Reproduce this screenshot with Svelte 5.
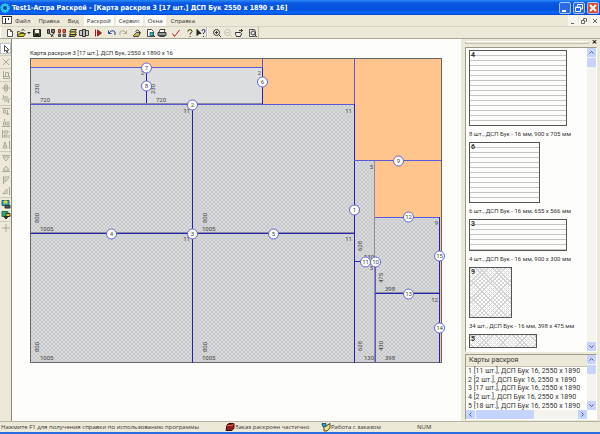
<script lang="ts">
  type Shape = [d: string, stroke: string, fill?: string];

  const gray = '#aca899';

  // every icon lives in a 10x10 box
  const icons: Record<string, Shape[]> = {
    new: [['M2.5 1.5h3l2 2v5h-5z', '#555', '#fff'], ['M5.5 1.5v2h2', '#555']],
    open: [['M1.5 8.5v-5h2l1 1h3v1', '#555', '#e8d860'], ['M1.5 8.5l2-3h6l-2 3z', '#4a4a20', '#d8c030'], ['M5.5 2.5q2-2 3 0', '#222']],
    save: [['M1.5 1.5h7v7h-7z', '#222', '#54582c'], ['M3.5 2h3v2.500h-3z', '#fff', '#fff'], ['M3.500 8.500v-2h3v2', '#222', '#222']],
    order: [['M1.500 1.500h2v4h-2zM5.500 1.500h3v3h-3z', '#333', '#888'], ['M3.500 5.500l4 3M8 5l-3 4', '#222']],
    parts: [['M1.500 1.500h2v3h-2zM6 1.500h2.500v3h-2.500z', '#a03028', '#c86050'], ['M1.500 6h2v2.500h-2zM6 6h2.500v2.500h-2.500z', '#444', '#888']],
    sheets: [['M3 1.500h5.500l-2 2.500h-5z', '#444', '#e0cc40'], ['M3 4h5.500l-2 2.500h-5z', '#444', '#e8d850'], ['M1 8.500l2-2h5.500l-2 2z', '#333', '#b8a030']],
    book: [['M.5 2.500h3v5h-3zM6.500 2.500h3v5h-3z', '#444', '#ccc'], ['M3.500 1.500h3v7h-3z', '#333', '#b8b8a8']],
    run: [['M2.500 1.500v7', '#a01818'], ['M4.500 2l4 3-4 3z', '#a01818', '#b82020']],
    undo: [['M1.500 2.500v3h3', '#1c3c9c'], ['M2 5q3-4 6-1v3', '#1c3c9c']],
    redo: [['M8.500 2.500v3h-3', gray], ['M8 5q-3-4-6-1v3', gray]],
    turn: [['M1.500 7.500l3-3h4l-2 4h-5z', '#444', '#c8b850'], ['M3.500 3.500q2-3 4 0v2', '#333']],
    preview: [['M1.500 1.500h4l2 2v5h-6z', '#444', '#fff'], ['M4 4.500h3v3h-3z', '#187888', '#50b8c0'], ['M7 7l2 2', '#222']],
    print: [['M3 1.500h5l-1 3h-5z', '#444', '#fff'], ['M1 4.500h8v3h-8z', '#333', '#999'], ['M2.500 7.500h5v1h-5z', '#444', '#ddd']],
    check: [['M1.500 5.500l2 3 5-6.500', '#b02020']],
    help: [['M3 3.500q0-2 2-2t2 2q0 1-2 2v1', '#2c2c10'], ['M5 8v1', '#2c2c10'], ['M4 2.500q1-1 2 0', '#d8c830']],
    whats: [['M1 1.500v6l2-2h2z', '#222', '#222'], ['M6 3q0-1.500 1.500-1.500t1.500 1.500-1.500 2v1M7.500 8v1', '#20208c']],
    zoomIn: [['M4.500 1.500a3 3 0 1 0 .1 0zM6.500 6.500l2.500 2.500', '#333'], ['M3 4.500h3M4.500 3v3', '#333']],
    zoomOut: [['M4.500 1.500a3 3 0 1 0 .1 0zM6.500 6.500l2.500 2.500M3 4.500h3', '#c4c0b0']],
    pan: [['M1.500 4.500h5l1 1-1 3h-4l-1-2z', '#333', '#eee'], ['M5 2.500h4M7.500 1v3', '#333']],
    fit: [['M1.500 1.500h5l1 2v5h-6z', '#555', '#eee'], ['M5 3a2 2 0 1 0 .1 0zM6.500 6.500l2.500 2.500', '#333']],
    pointer: [['M3.500 1.500v6l1.500-1.500 1 3 1-.5-1-2.500h2z', '#555', '#fff']],
    del: [['M2 2l6 6M8 2l-6 6', gray]],
    rotate: [['M2.500 1v7.500h6v-2h-6M4.500 6.500v-4h3v4', gray]],
    splitV: [['M1 5h8M3.500 2v6M6.500 2v6M5 .5v9', gray]],
    splitH: [['M1 5h8M3 3h4M3 7h4M2.500 1v3M7.500 6v3', gray]],
    top: [['M1 1.500h8M2.500 3h2v3h-2zM6.500 3v5M5 6l1.500 2 1.500-2', gray]],
    bottom: [['M1 8.500h8M2.500 4h2v3h-2zM6 4h2v3h-2zM3.500 1v2', gray]],
    left: [['M1.500 1v8M3 2h4v2h-4zM3 6h3v2h-3zM8 6v3', gray]],
    right: [['M8.500 1v8M2 8l2-6 2 6zM2.500 6h3', gray]],
    down: [['M1 2.500h8M2 4h6l-3 4z', gray]],
    up: [['M1 7.500h8M2 6h6l-3-4z', gray]],
    flag: [['M2.500 1v8M4 2h4l-2 3-2 2z', gray]],
    peak: [['M8.500 1v8M2 7.500l4-4.500v4.500z', gray]],
    saveMap: [['M1 1.500h7v5h-7z', '#186878', '#30a0a8'], ['M3 2h3v2h-3z', '#e0d040', '#e0d040'], ['M4 6.500h5v2.500h-5z', '#333', '#555']],
    loadMap: [['M1 1.500h6v5h-6z', '#187858', '#38a078'], ['M5 3.500h4v3h-4z', '#333', '#e0c830'], ['M3 6.500h4l-2 2.500z', '#222', '#333']],
    grid: [['M1 5h8M5 1v8', gray]],
    box: [['M2 3l2-1.500h5v4.500l-2 2.500h-6z', '#300808', '#981c1c'], ['M2 3.500h5.500l1-2', '#d86050']],
    work: [['M1 2h3l1 2 4-2.500v4.500l-3 3h-3v-3z', '#4c4c20', '#e8e090'], ['M1 1.500h4v3h-3z', '#186078', '#40a0b0']],
  };

  const toolbar = [
    ['new', 'open', 'arrow', 'save'],
    ['order', 'parts', 'sheets', 'book'],
    ['run'],
    ['undo', 'redo'],
    ['turn'],
    ['preview', 'print'],
    ['check'],
    ['help', 'whats'],
  ];
  const zoomBar = [['zoomIn', 'zoomOut', 'pan'], ['fit']];

  const sideBar = [
    ['pointer'],
    ['del'],
    ['rotate'],
    ['splitV', 'splitH'],
    ['top', 'bottom', 'left', 'right'],
    ['down', 'up', 'flag', 'peak'],
    ['saveMap', 'loadMap'],
    ['grid'],
  ];

  const menu = ['Файл', 'Правка', 'Вид', 'Раскрой', 'Сервис', 'Окна', 'Справка'];
  const lit = ['Раскрой', 'Сервис', 'Окна'];

  // x, y, width, height of the placed pieces
  const pieces = [
    [0, 47, 162, 129], [162, 47, 162, 129],
    [0, 176, 162, 129], [162, 176, 162, 129],
    [324, 103, 21, 101], [324, 204, 21, 101],
    [345, 159, 64, 77], [345, 236, 64, 69],
  ];
  const plain = [[0, 10, 116, 37], [116, 10, 116, 37]];

  // x1, y1, x2, y2, class
  const cuts: [number, number, number, number, string][] = [
    [0, 9, 232, 9, 'thin'],
    [116, 10, 116, 46, 'navy'],
    [232, 0, 232, 10, 'thin'],
    [232, 10, 232, 46, 'navy'],
    [0, 45, 232, 45, 'edge'],
    [0, 46, 324, 46, 'thin'],
    [324, 0, 324, 46, 'thin'],
    [324, 46, 324, 305, 'navy'],
    [162, 46, 162, 305, 'navy'],
    [0, 174, 324, 174, 'edge'],
    [0, 175, 324, 175, 'navy'],
    [324, 102, 412, 102, 'thin'],
    [344, 103, 344, 305, 'edge'],
    [345, 204, 345, 305, 'thin'],
    [324, 203, 345, 203, 'navy'],
    [345, 159, 409, 159, 'thin'],
    [345, 234, 409, 234, 'edge'],
    [345, 235, 409, 235, 'navy'],
    [409, 159, 409, 305, 'navy'],
  ];

  const marks = [
    [324, 152], [162, 47], [162, 176], [81, 176], [243, 176],
    [232, 24], [116, 10], [116, 28], [368, 103], [345, 204],
    [335, 204], [378, 159], [378, 236], [409, 270], [409, 198],
  ];
  // 11 is drawn under 10
  const order = [1, 2, 3, 4, 5, 6, 7, 8, 9, 11, 10, 12, 13, 14, 15];

  const widths: [number, number, string][] = [
    [10, 44, '720'], [126, 44, '720'],
    [10, 173, '1005'], [172, 173, '1005'],
    [10, 302, '1005'], [172, 302, '1005'],
    [334, 201, '130'], [334, 302, '130'],
    [355, 233, '398'], [355, 302, '398'],
  ];
  const heights: [number, number, string][] = [
    [9, 36, '230'], [125, 36, '230'],
    [9, 165, '800'], [177, 165, '800'],
    [9, 294, '800'], [177, 294, '800'],
    [332, 193, '628'], [332, 293, '628'],
    [353, 225, '475'], [353, 293, '430'],
  ];
  const numbers: [number, number, string][] = [
    [114, 17, '2'], [231, 17, '2'],
    [160, 55, '11'], [322, 55, '11'],
    [160, 183, '11'], [322, 183, '11'],
    [343, 111, '5'], [343, 212, '5'],
    [408, 167, '9'], [408, 244, '12'],
  ];

  const scale = 0.109;
  const parts = [
    { id: 4, count: 8, w: 900, h: 705, striped: true },
    { id: 6, count: 6, w: 655, h: 566, striped: true },
    { id: 3, count: 4, w: 900, h: 300, striped: true },
    { id: 9, count: 34, w: 398, h: 475, striped: false },
    { id: 5, count: 10, w: 628, h: 130, striped: false },
  ];

  const maps = [11, 2, 17, 2, 18];
  let selected = $state(3);
</script>

{#snippet icon(name: string)}
  <svg class="icon" viewBox="0 0 10 10" aria-hidden="true">
    {#each icons[name] as [d, stroke, fill]}
      <path {d} {stroke} fill={fill ?? 'none'} />
    {/each}
  </svg>
{/snippet}

{#snippet tools(groups: string[][])}
  {#each groups as group}
    <div class="group">
      {#each group as name}
        {#if name === 'arrow'}
          <button class="drop" aria-label="open list"><span></span></button>
        {:else}
          <button class="tool" class:active={name === 'pointer'} aria-label={name}>{@render icon(name)}</button>
        {/if}
      {/each}
    </div>
  {/each}
{/snippet}

{#snippet chevron(d: string)}
  <button class="chev" aria-label="scroll">
    <svg viewBox="0 0 9 9"><path {d} /></svg>
  </button>
{/snippet}

<div class="window">
  <header class="title">
    <svg class="logo" viewBox="0 0 10 10">
      <circle cx="5" cy="5" r="3.700" fill="none" stroke="#30e0f0" stroke-width="2" stroke-dasharray="1.700 .6" />
      <circle cx="5" cy="5" r="2.600" fill="#0848c0" stroke="#30e0f0" />
    </svg>
    <h1>Test1-Астра Раскрой - [Карта раскроя 3 [17 шт.] ДСП Бук 2550 x 1890 x 16]</h1>
    <div class="sys">
      <button aria-label="minimize"><svg viewBox="0 0 12 12"><path d="M3 9h4" stroke-width="2" /></svg></button>
      <button aria-label="restore"><svg viewBox="0 0 12 12"><path d="M4.500 4v-1.500h5v4.500h-2M2.500 5.500h5v4h-5zM2.500 5h5" /></svg></button>
      <button class="close" aria-label="close"><svg viewBox="0 0 12 12"><path d="M3 3l6 6M9 3l-6 6" stroke-width="2" /></svg></button>
    </div>
  </header>

  <nav class="menu">
    <svg class="doc" viewBox="0 0 10 10">
      <path d="M.5 1.500h9v7h-9z" fill="#fff" stroke="#555" />
      <path d="M0 1.500h10M3.500 3v5M6.500 3v2" stroke="#222" />
    </svg>
    <div class="items">
      {#each menu as item}
        <button class:lit={lit.includes(item)}>{item}</button>
      {/each}
    </div>
    <div class="child">
      <button aria-label="minimize document"><svg viewBox="0 0 10 10"><path d="M3 7.500h3" /></svg></button>
      <button aria-label="restore document"><svg viewBox="0 0 10 10"><path d="M4.500 4v-1.500h3v3h-1M2.500 4.500h3v3h-3z" /></svg></button>
      <button aria-label="close document"><svg viewBox="0 0 10 10"><path d="M3 3l4 4M7 3l-4 4" /></svg></button>
    </div>
  </nav>

  <div class="bars">
    <div class="bar">{@render tools(toolbar)}</div>
    <div class="bar">{@render tools(zoomBar)}</div>
  </div>

  <main>
    <aside class="side">{@render tools(sideBar)}</aside>

    <section class="canvas">
      <h2>Карта раскроя 3 [17 шт.], ДСП Бук, 2550 x 1890 x 16</h2>
      <svg class="sheet" viewBox="0 0 412 305">
        <defs>
          <pattern id="hatch" width="4" height="4" patternUnits="userSpaceOnUse">
            <rect width="4" height="4" fill="#d9dadb" />
            <path d="M0 0l4 4M4 0l-4 4" stroke="#c0c1c3" stroke-width=".7" />
          </pattern>
        </defs>
        <rect width="412" height="305" fill="#ffc58c" />
        {#each plain as [x, y, w, h]}
          <rect {x} {y} width={w} height={h} fill="#dcddde" />
        {/each}
        {#each pieces as [x, y, w, h]}
          <rect {x} {y} width={w} height={h} fill="url(#hatch)" />
        {/each}
        <rect class="frame" x=".5" y=".5" width="411" height="304" />
        {#each cuts as [x1, y1, x2, y2, kind]}
          <path class={kind} d="M{x1 + (x1 === x2 ? 0.5 : 0)} {y1 + (y1 === y2 ? 0.5 : 0)}L{x2 + (x1 === x2 ? 0.5 : 0)} {y2 + (y1 === y2 ? 0.5 : 0)}" />
        {/each}
        {#each widths as [x, y, label]}
          <text {x} {y}>{label}</text>
        {/each}
        {#each heights as [x, y, label]}
          <text transform="translate({x} {y}) rotate(-90)">{label}</text>
        {/each}
        {#each numbers as [x, y, label]}
          <text {x} {y} text-anchor="end">{label}</text>
        {/each}
        {#each order as n}
          <circle cx={marks[n - 1][0] + 0.5} cy={marks[n - 1][1]} r="5" />
          <text x={marks[n - 1][0] + 0.5} y={marks[n - 1][1] + 2} text-anchor="middle">{n}</text>
        {/each}
      </svg>
    </section>

    <aside class="panel">
      <div class="grip"><i></i><button aria-label="close panel">×</button></div>
      <div class="box parts">
        <div class="list">
          {#each parts as part}
            <figure>
              <div class="thumb" class:striped={part.striped} style="width: {Math.round(part.w * scale)}px; height: {Math.floor(part.h * scale)}px">
                {part.id}
              </div>
              <figcaption>{part.count} шт., ДСП Бук - 16 мм, {part.w} x {part.h} мм</figcaption>
            </figure>
          {/each}
        </div>
        <div class="vscroll">
          {@render chevron('M2.500 5.500l2-2 2 2')}
          <i class="thumbbar"></i>
          {@render chevron('M2.500 3.500l2 2 2-2')}
        </div>
      </div>
      <div class="box maps">
        <div class="list">
          <h3>Карты раскроя</h3>
          <div class="rows">
            {#each maps as count, i}
              <button onclick={() => (selected = i + 1)} aria-pressed={selected === i + 1}>{i + 1} [{count} шт.], ДСП Бук 16, 2550 x 1890</button>
            {/each}
          </div>
          <div class="hscroll">
            {@render chevron('M5.500 2.500l-2 2 2 2')}
            <i></i>
            {@render chevron('M3.500 2.500l2 2-2 2')}
          </div>
        </div>
        <div class="vscroll short">
          {@render chevron('M2.500 5.500l2-2 2 2')}
          <i class="thumbbar"></i>
          {@render chevron('M2.500 3.500l2 2 2-2')}
        </div>
      </div>
    </aside>
  </main>

  <footer>
    <span class="hint">Нажмите F1 для получения справки по использованию программы</span>
    <span class="cell">{@render icon('box')}Заказ раскроен частично</span>
    <span class="cell">{@render icon('work')}Работа с заказом</span>
    <span class="num">NUM</span>
  </footer>
</div>

<style>
  :global(body) {
    margin: 0;
    background: #ece9d8;
  }

  .window {
    display: flex;
    flex-direction: column;
    height: 100vh;
    box-sizing: border-box;
    border-bottom: 2px solid #2a6ae0;
    background: #ece9d8;
    font: 7px/8px Roboto, "Noto Sans", sans-serif;
    color: #333;
    overflow: hidden;
  }

  button {
    display: flex;
    align-items: center;
    justify-content: center;
    padding: 0;
    border: 0;
    background: none;
    font: inherit;
    color: inherit;
  }

  h1, h2, h3, figure {
    margin: 0;
    font-weight: normal;
  }

  .icon {
    display: block;
    width: 10px;
    height: 10px;
  }

  .title {
    display: flex;
    align-items: center;
    flex: none;
    height: 15px;
    background: linear-gradient(#2a8cf4, #0a58e4 20%, #0450dc 60%, #0668fc 85%, #0444c4);
  }

  .logo {
    width: 10px;
    height: 10px;
    margin-right: 2px;
  }

  h1 {
    flex: 1;
    font: bold 7px/12px "DejaVu Sans Condensed", "Noto Sans", sans-serif;
    color: #fff;
    white-space: nowrap;
  }

  .sys {
    display: flex;
    gap: 2px;
    padding-right: 1px;
  }

  .sys button {
    width: 12px;
    height: 12px;
    box-sizing: border-box;
    border: 1px solid #a8c4f8;
    border-radius: 2px;
    background: #2c68e4;
  }

  .sys .close {
    background: #dc5030;
  }

  .sys svg {
    flex: none;
    width: 12px;
    height: 12px;
    fill: none;
    stroke: #fff;
  }

  .menu {
    display: flex;
    align-items: stretch;
    flex: none;
    height: 11px;
    padding-left: 2px;
    font: 6px/8px "Open Sans", sans-serif;
  }

  .doc {
    width: 10px;
    height: 10px;
  }

  .items {
    display: flex;
    gap: 2px;
  }

  .items button {
    padding: 0 3px;
  }

  .items .lit {
    background: #fcfbf8;
  }

  .child {
    display: flex;
    gap: 1px;
    margin-left: auto;
  }

  .child button {
    width: 10px;
    background: #f6f5ee;
  }

  .child svg {
    width: 10px;
    height: 10px;
    fill: none;
    stroke: #666;
  }

  .bars {
    display: flex;
    flex: none;
    height: 11px;
    border-top: 1px solid #d8d4c4;
    border-bottom: 1px solid #aca899;
  }

  .bar {
    display: flex;
    gap: 3px;
    padding-left: 3px;
    border-left: 1px solid #fff;
    border-right: 1px solid #c0bcac;
  }

  .group {
    display: flex;
  }

  .tool {
    width: 11px;
    height: 11px;
  }

  .tool.active {
    background: #fff;
    outline: 1px solid #b8c0d0;
    outline-offset: -1px;
  }

  .drop {
    width: 5px;
    height: 11px;
  }

  .drop span {
    border: 2px solid transparent;
    border-top-color: #333;
    border-bottom: 0;
  }

  main {
    display: flex;
    flex: 1;
    min-height: 0;
  }

  .side {
    display: flex;
    flex-direction: column;
    gap: 2px;
    flex: none;
    width: 11px;
    padding-top: 4px;
    border-right: 1px solid #8c897c;
  }

  .side .group {
    flex-direction: column;
  }

  .side .group + .group::before {
    content: "";
    height: 1px;
    margin: -1px 0 0;
    background: #cfcbba;
  }

  .canvas {
    flex: 1;
    min-width: 0;
    padding: 9px 18px 0;
    background: #fdfefc;
  }

  h2 {
    height: 10px;
    font: 6px/10px Roboto, sans-serif;
    white-space: nowrap;
  }

  .sheet {
    display: block;
    width: 100%;
    overflow: visible;
  }

  .sheet text {
    font: 6px Roboto, sans-serif;
    fill: #444;
  }

  .frame, .thin, .navy, .edge {
    fill: none;
    stroke: #666;
  }

  .thin {
    stroke: #5a5ad8;
  }

  .navy {
    stroke: #2424b4;
  }

  .edge {
    stroke: #8c8c9c;
  }

  .sheet circle {
    fill: #fff;
    stroke: #6464d4;
  }

  .panel {
    display: flex;
    flex-direction: column;
    gap: 2px;
    flex: none;
    width: 132px;
    padding: 0 3px 1px 4px;
    border-left: 1px solid #fff;
  }

  .grip {
    display: flex;
    align-items: center;
    gap: 3px;
    height: 6px;
  }

  .grip i {
    flex: 1;
    height: 1px;
    border: 1px solid #c4c0b0;
    border-top-color: #fff;
  }

  .grip button {
    width: 5px;
    height: 5px;
    font: bold 7px/5px "DejaVu Sans", sans-serif;
    color: #000;
  }

  .box {
    display: flex;
    border: 1px solid #9c998c;
    border-right-color: #fff;
    border-bottom-color: #fff;
    background: #fdfefc;
    overflow: hidden;
  }

  .parts {
    flex: 1;
    min-height: 0;
  }

  .list {
    flex: 1;
    min-width: 0;
    overflow: hidden;
  }

  .parts .list {
    padding: 2px 0 0 3px;
  }

  .thumb {
    box-sizing: border-box;
    padding-left: 1px;
    border: 1px solid #555;
    background: repeating-linear-gradient(45deg, transparent 0 2px, #d4d4d4 2px 3px), repeating-linear-gradient(-45deg, #fdfefc 0 2px, #d4d4d4 2px 3px);
    font: bold 7px/9px Roboto, sans-serif;
  }

  .thumb.striped {
    background: repeating-linear-gradient(#fdfefc 0 4px, #c4c4c4 4px 5px);
  }

  figcaption {
    height: 16px;
    font: 6px/16px Roboto, sans-serif;
    white-space: nowrap;
  }

  .vscroll {
    display: flex;
    flex-direction: column;
    flex: none;
    width: 9px;
    background: #f4f3ee;
  }

  .vscroll.short {
    margin-bottom: 9px;
  }

  .chev {
    flex: none;
    width: 9px;
    height: 9px;
    border-radius: 1px;
    background: #c4d4fc;
  }

  .chev svg {
    width: 9px;
    height: 9px;
    fill: none;
    stroke: #4d6185;
  }

  .thumbbar {
    height: 9px;
    margin: 1px 0 auto;
    border-radius: 1px;
    background: #c4d4fc;
  }

  .maps {
    flex: none;
    height: 64px;
  }

  .maps .list {
    display: flex;
    flex-direction: column;
  }

  h3 {
    height: 11px;
    padding-left: 3px;
    border-bottom: 1px solid #c8c4b4;
    background: #ece9d8;
    font-size: 7px;
    line-height: 11px;
  }

  .rows {
    display: flex;
    flex: 1;
    flex-direction: column;
  }

  .rows button {
    flex: 1;
    justify-content: start;
    padding-left: 2px;
    white-space: nowrap;
  }

  .hscroll {
    display: flex;
    gap: 1px;
    height: 9px;
    background: #f4f3ee;
  }

  .hscroll i {
    width: 58px;
    margin-right: auto;
    border-radius: 1px;
    background: #c4d4fc;
  }

  footer {
    display: flex;
    align-items: center;
    flex: none;
    height: 10px;
    border-top: 1px solid #b8b4a4;
    font: 6px/8px "Open Sans", sans-serif;
    white-space: nowrap;
  }

  .hint {
    width: 224px;
    padding-left: 1px;
  }

  .cell {
    display: flex;
    width: 96px;
    align-items: center;
  }

  .num {
    flex: 1;
  }
</style>
